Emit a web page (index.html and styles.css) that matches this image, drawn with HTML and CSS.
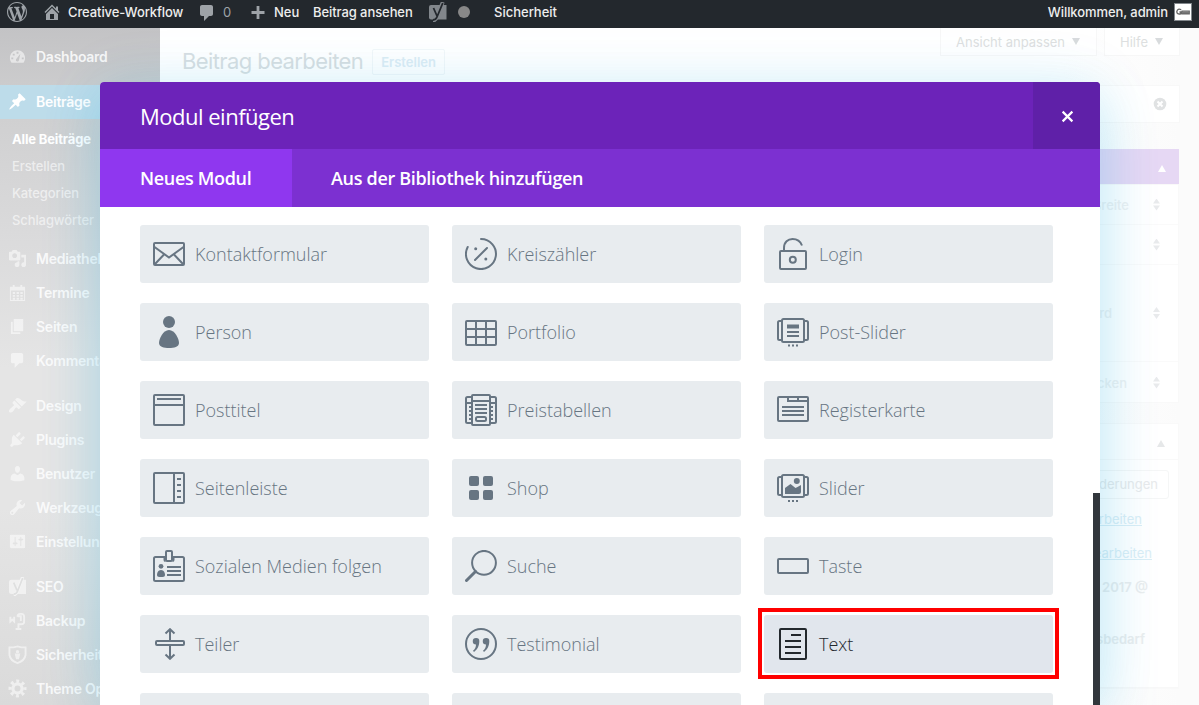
FILE: index.html
```html
<!DOCTYPE html>
<html lang="de">
<head>
<meta charset="utf-8">
<title>Beitrag bearbeiten</title>
<link rel="stylesheet" href="styles.css">
</head>
<body>
<header class="adminbar">
  <svg class="ab-icon ab-logo" viewBox="0 0 20 20"><path d="M20 10c0-5.51-4.49-10-10-10C4.48 0 0 4.49 0 10c0 5.52 4.48 10 10 10 5.51 0 10-4.48 10-10zM7.78 15.37L4.37 6.22c.55-.02 1.17-.08 1.17-.08.5-.06.44-1.13-.06-1.11 0 0-1.45.11-2.37.11-.18 0-.37 0-.58-.01C4.12 2.69 6.87 1.11 10 1.11c2.33 0 4.45.87 6.05 2.34-.68-.11-1.65.39-1.65 1.58 0 .74.45 1.36.9 2.1.35.61.55 1.36.55 2.46 0 1.49-1.4 5-1.4 5l-3.03-8.37c.54-.02.82-.17.82-.17.5-.05.44-1.25-.06-1.22 0 0-1.44.12-2.38.12-.87 0-2.33-.12-2.33-.12-.5-.03-.56 1.2-.06 1.22l.92.08 1.26 3.41zM17.41 10c.24-.64.74-1.87.43-4.25.7 1.29 1.05 2.71 1.05 4.25 0 3.29-1.73 6.24-4.4 7.78.97-2.59 1.94-5.2 2.92-7.78zM6.1 18.09C3.12 16.65 1.11 13.53 1.11 10c0-1.3.23-2.48.72-3.59C3.25 10.3 4.67 14.2 6.1 18.09zm4.03-6.63l2.58 6.98c-.86.29-1.76.45-2.71.45-.79 0-1.57-.11-2.29-.33.81-2.38 1.62-4.74 2.42-7.1z"/></svg>
  <div class="ab-item ab-site"><svg class="ab-icon" viewBox="0 0 20 20"><path d="M16 8.5l1.53 1.53-1.06 1.06L10 4.6l-6.47 6.49-1.06-1.06L10 2.5l4 4v-2h2v4zm-6-2.46l6 5.99V18H4v-5.97zM12 17v-5H8v5h4z"/></svg><span>Creative-Workflow</span></div>
  <div class="ab-item ab-comments"><svg class="ab-icon" viewBox="0 0 20 20"><path d="M5 3h9c1.100 0 2 .9 2 2v7c0 1.100-.9 2-2 2h-2l-5 5v-5H5c-1.100 0-2-.9-2-2V5c0-1.100.9-2 2-2z"/></svg><span class="ab-dim">0</span></div>
  <div class="ab-item ab-new"><svg class="ab-icon" viewBox="0 0 20 20"><path d="M8.600 4h2.800v5.100h5.100v2.800h-5.100v5.100h-2.800v-5.100h-5.100v-2.800h5.100z"/></svg><span>Neu</span></div>
  <div class="ab-item ab-view"><span>Beitrag ansehen</span></div>
  <div class="ab-item ab-seo"><svg class="ab-icon" viewBox="0 0 20 20"><path d="M3 3h15.500v14.500H3q-2 0-2-2V5q0-2 2-2z"/><path class="ab-edge" d="M14.800 0L9 15q-1.200 3.500-4 3.500"/><path class="ab-cut" d="M5.500 6l3.500 8M14.800 1L9 15q-1.200 3-4 3"/></svg><i class="ab-dot"></i></div>
  <div class="ab-item ab-security"><span>Sicherheit</span></div>
  <div class="ab-item ab-user"><span>Willkommen, admin</span><b class="avatar"><svg viewBox="0 0 18 18"><path d="M7 6.500Q3 4.500 2 8.500Q2 12 6.500 11V9H5M8 8h8v3H8z" fill="none" stroke="#666" stroke-width="1.500"/><path d="M8 9.500h8" stroke="#777" stroke-width="2"/></svg></b></div>
</header>

<div class="page">
  <nav class="sidebar">
    <a class="menu-item first"><svg viewBox="0 0 20 20"><path fill-rule="evenodd" d="M3.760 16.500h12.480c1.100-1.370 1.760-3.110 1.760-5 0-4.420-3.580-8-8-8s-8 3.580-8 8c0 1.890.66 3.630 1.760 5zM9 5h2v2H9zM5 7h2v2H5zM3.500 11h2v2h-2zM14.500 11h2v2h-2zM8.500 13l4.500-6-1.500 7a1.600 1.600 0 1 1-3-1z"/></svg>Dashboard</a>
    <a class="menu-item current"><svg viewBox="0 0 20 20"><path d="M10.440 3.020l1.820-1.820 6.360 6.350-1.830 1.820c-1.050-.68-2.480-.57-3.410.36l-.75.75c-.92.93-1.040 2.350-.35 3.410l-1.830 1.820-2.410-2.410-2.800 2.790c-.42.42-3.380 2.710-3.800 2.290s1.860-3.390 2.280-3.810l2.790-2.790L4.100 9.360l1.830-1.820c1.050.69 2.480.57 3.400-.36l.75-.75c.93-.92 1.050-2.350.36-3.410z"/></svg>Beiträge</a>
    <div class="submenu"><a class="on">Alle Beiträge</a><a>Erstellen</a><a>Kategorien</a><a>Schlagwörter</a></div>
    <a class="menu-item"><svg viewBox="0 0 20 20"><path d="M13 11V4c0-.55-.45-1-1-1h-1.670L9 1H5L3.670 3H2c-.55 0-1 .45-1 1v7c0 .55.45 1 1 1h10c.55 0 1-.45 1-1zM7 4.500c1.380 0 2.500 1.120 2.500 2.500S8.380 9.500 7 9.500 4.500 8.380 4.500 7 5.620 4.500 7 4.500zM14 6h5v10.500c0 1.380-1.120 2.500-2.500 2.500S14 17.880 14 16.500s1.120-2.500 2.500-2.500c.17 0 .34.02.5.05V9h-3V6zm-4 8.050V13h2v3.500c0 1.380-1.120 2.500-2.500 2.500S7 17.880 7 16.500 8.120 14 9.500 14c.17 0 .34.02.5.05z"/></svg>Mediathek</a>
    <a class="menu-item"><svg viewBox="0 0 20 20"><path fill-rule="evenodd" d="M2 4h3V2h2v2h6V2h2v2h3v15H2zM3 8v10h14V8z"/><path d="M5 9.500h2.500v2H5zM9 9.500h2.500v2H9zM13 9.500h2.500v2H13zM5 12.500h2.500v2H5zM9 12.500h2.500v2H9zM13 12.500h2.500v2H13zM5 15.500h2.500v2H5zM9 15.500h2.500v2H9zM13 15.500h2.500v2H13z"/></svg>Termine</a>
    <a class="menu-item"><svg viewBox="0 0 20 20"><path d="M6 15V2h10v13H6zm-1 1h8v2H3V5h2v11z"/></svg>Seiten</a>
    <a class="menu-item"><svg viewBox="0 0 20 20"><path d="M5 2h9c1.100 0 2 .9 2 2v7c0 1.100-.9 2-2 2h-2l-5 5v-5H5c-1.100 0-2-.9-2-2V4c0-1.100.9-2 2-2z"/></svg>Kommentare</a>
    <a class="menu-item group"><svg viewBox="0 0 20 20"><path d="M14.480 11.060L7.410 3.990l1.500-1.500c.5-.56 2.300-.47 3.510.32 1.210.8 1.430 1.280 2.910 2.100 1.180.64 2.450 1.260 4.450.85zm-.71.71L6.700 4.700 4.930 6.470c-.39.39-.39 1.020 0 1.410l1.060 1.060c.39.39.39 1.030 0 1.420-.6.6-1.430 1.110-2.210 1.690-.35.26-.7.53-1.010.84C1.430 14.230.4 16.080 1.400 17.070c.99 1 2.840-.03 4.180-1.360.31-.31.58-.66.85-1.020.57-.78 1.080-1.610 1.690-2.210.39-.39 1.020-.39 1.410 0l1.060 1.060c.39.39 1.020.39 1.410 0z"/></svg>Design</a>
    <a class="menu-item"><svg viewBox="0 0 20 20"><path d="M13.110 4.360L9.870 7.600 8 5.730l3.240-3.240c.35-.34 1.050-.2 1.560.32.52.51.66 1.210.31 1.550zm-8 1.770l.91-1.120 9.010 9.010-1.190.84c-.71.71-2.630 1.160-3.820 1.160H6.140L4.900 17.260c-.59.59-1.540.59-2.120 0-.59-.58-.59-1.530 0-2.120l1.240-1.240v-3.880c0-1.130.4-3.190 1.090-3.890zm7.260 3.970l3.240-3.240c.34-.35 1.040-.21 1.550.31.52.51.66 1.210.31 1.550l-3.240 3.250z"/></svg>Plugins</a>
    <a class="menu-item"><svg viewBox="0 0 20 20"><path d="M10 9.250c-2.270 0-2.730-3.440-2.730-3.440C7 4.020 7.820 2 9.970 2c2.160 0 2.980 2.020 2.710 3.810 0 0-.41 3.440-2.680 3.440zm0 2.570L12.720 10c2.390 0 4.520 2.330 4.520 4.530v2.490s-3.650 1.130-7.240 1.130c-3.650 0-7.240-1.130-7.240-1.130v-2.490c0-2.250 1.940-4.480 4.470-4.480z"/></svg>Benutzer</a>
    <a class="menu-item"><svg viewBox="0 0 20 20"><path d="M16.680 9.770c-1.340 1.340-3.300 1.670-4.950.99l-5.410 6.520c-.99.99-2.590.99-3.580 0s-.99-2.590 0-3.570l6.520-5.420c-.68-1.650-.35-3.610.99-4.950 1.280-1.280 3.120-1.620 4.720-1.060l-2.890 2.890 2.820 2.820 2.860-2.870c.53 1.580.18 3.390-1.080 4.650zM3.810 16.210c.4.39 1.040.39 1.430 0 .4-.4.4-1.040 0-1.430-.39-.4-1.030-.4-1.430 0-.39.39-.39 1.030 0 1.430z"/></svg>Werkzeuge</a>
    <a class="menu-item"><svg viewBox="0 0 20 20"><path d="M18 16V4c0-.55-.45-1-1-1H3c-.55 0-1 .45-1 1v12c0 .55.45 1 1 1h14c.55 0 1-.45 1-1zM8 11h1c.55 0 1 .45 1 1s-.45 1-1 1H8v1.500c0 .28-.22.5-.5.5s-.5-.22-.5-.5V13H6c-.55 0-1-.45-1-1s.45-1 1-1h1V5.500c0-.28.22-.5.5-.5s.5.22.5.5V11zm5-2h-1c-.55 0-1-.45-1-1s.45-1 1-1h1V5.500c0-.28.22-.5.5-.5s.5.22.5.5V7h1c.55 0 1 .45 1 1s-.45 1-1 1h-1v5.500c0 .28-.22.5-.5.5s-.5-.22-.5-.5V9z"/></svg>Einstellungen</a>
    <a class="menu-item group"><svg viewBox="0 0 20 20"><path d="M3.500 3H19v15H3.500q-2.500 0-2.500-2.500v-10Q1 3 3.500 3z"/><path fill="none" stroke="#fff" stroke-width="3.600" d="M15.500 0L10 15q-1.200 3.500-4 3.500"/><path fill="none" stroke="#dedfdf" stroke-width="1.800" d="M6 6l3.500 8M15.500 1L10 15q-1.200 3-4 3"/></svg>SEO</a>
    <a class="menu-item"><svg viewBox="0 0 20 20"><path fill="none" stroke="currentColor" stroke-width="2" d="M2.500 6v5l2-2 2 2V6M10 6q0-3 3-3h1q3 0 3 3v5q0 3-3 3h-3M10 5.500h3.500v5M11 13v6M8 19h6"/></svg>Backup</a>
    <a class="menu-item"><svg viewBox="0 0 20 20"><path fill="none" stroke="currentColor" stroke-width="2" d="M1.500 2.500H6l4-1 4 1h4.500v8q-1 6-8.500 8.500-7.500-2.500-8.500-8.500z"/><circle cx="10" cy="7" r="1.800"/><path d="M7 9h6l-1.500 6h-3z"/></svg>Sicherheit</a>
    <a class="menu-item"><svg viewBox="0 0 20 20"><circle cx="10" cy="10" r="4.800" fill="none" stroke="currentColor" stroke-width="3.400"/><circle cx="10" cy="10" r="7.800" fill="none" stroke="currentColor" stroke-width="3.400" stroke-dasharray="3.100 3.026" stroke-dashoffset="1.550"/></svg>Theme Optionen</a>
  </nav>

  <main class="content">
    <div class="topline">
      <h1>Beitrag bearbeiten</h1><span class="add-new">Erstellen</span>
      <div class="screen-tabs"><span class="tab-view">Ansicht anpassen <i class="down"></i></span><span class="tab-help">Hilfe <i class="down"></i></span></div>
    </div>
    <div class="notice"><svg viewBox="0 0 14 14"><circle cx="7" cy="7" r="6.300" fill="#e0e2e3"/><path d="M4.500 4.500l5 5m0-5l-5 5" stroke="#fff" stroke-width="2"/></svg></div>
    <aside class="metaboxes">
      <div class="box-head divi"><i class="up"></i></div>
      <div class="box settings">
        <div class="row r1"><span>Breite</span><i class="sorter"></i></div>
        <div class="row r2"><i class="sorter"></i></div>
        <div class="row r3"><span>Standard</span><i class="sorter"></i></div>
        <div class="row r4"><span>Verstecken</span><i class="sorter"></i></div>
      </div>
      <div class="box publish">
        <div class="box-head"><i class="up"></i></div>
        <div class="preview"><span>Änderungen</span></div>
        <p class="link l1"><u>Bearbeiten</u></p>
        <p class="link l2"><u>Bearbeiten</u></p>
        <p class="meta m1">2017 @</p>
        <p class="meta m2">Lesbarkeit: Verbesserungsbedarf</p>
      </div>
    </aside>
  </main>
</div>

<section class="modal">
  <div class="modal-head"><h2>Modul einfügen</h2><button class="close"><svg viewBox="0 0 12 12"><path d="M1.500 1.500l9 9m0-9l-9 9"/></svg></button></div>
  <div class="modal-tabs"><a class="active">Neues Modul</a><a>Aus der Bibliothek hinzufügen</a></div>
  <div class="modal-body">
    <div class="module"><svg viewBox="0 0 32 32"><rect x="1" y="5" width="30" height="22" rx="1"/><path d="M1.500 9L16 19.500 30.500 9M2 26L11 16.500M30 26L21 16.500"/></svg><span>Kontaktformular</span></div>
    <div class="module"><svg viewBox="0 0 32 32"><path stroke-linecap="round" d="M16 1A15 15 0 1 1 2.700 9M10 22L22 10"/><circle class="f" cx="10.700" cy="10.800" r="1.500"/><circle class="f" cx="20.800" cy="21" r="1.500"/></svg><span>Kreiszähler</span></div>
    <div class="module"><svg viewBox="0 0 32 32"><rect x="3" y="13" width="26" height="18" rx="1"/><circle cx="15.800" cy="21.800" r="3"/><path d="M7 13V10C7 4 11 1 15.500 1C20 1 23.500 3.500 25 7.500"/></svg><span>Login</span></div>

    <div class="module"><svg viewBox="0 0 32 32"><circle class="f" cx="16" cy="6" r="6"/><path class="f" d="M16 14C22 14 26 23 26 27C26 31 21 32 16 32S6 31 6 27C6 23 10 14 16 14z"/></svg><span>Person</span></div>
    <div class="module"><svg viewBox="0 0 32 32"><rect x="1" y="5" width="30" height="24" rx="1"/><path d="M1 13h30M1 21h30M11 5v24M21 5v24"/></svg><span>Portfolio</span></div>
    <div class="module"><svg viewBox="0 0 32 32"><rect x="5" y="3" width="22" height="23" rx="1.500"/><path d="M5 5H2.500Q1 5 1 6.500v16Q1 24 2.500 24H5M27 5h2.500Q31 5 31 6.500v16q0 1.500-1.500 1.500H27M10 16h12M10 20h12"/><path class="f" d="M10 8.500h12v4H10zM11 28.500h2v2h-2zM15 28.500h2v2h-2zM19 28.500h2v2h-2z"/></svg><span>Post-Slider</span></div>

    <div class="module"><svg viewBox="0 0 32 32"><rect x="1" y="1" width="30" height="30" rx="1"/><path d="M1 11h30M4 5h24"/></svg><span>Posttitel</span></div>
    <div class="module"><svg viewBox="0 0 32 32"><rect x="7" y="1" width="18" height="30" rx="1"/><path d="M7 3H2.500Q1 3 1 4.500v23Q1 29 2.500 29H7M25 3h4.500Q31 3 31 4.500v23q0 1.500-1.500 1.500H25M7 7h18M1 9h6M25 9h6M10 11h12M10 15h12M10 19h12M4 13h3M4 17h3M4 21h3M4 25h3M25 13h3M25 17h3M25 21h3M25 25h3"/><rect x="11" y="23" width="10" height="4" rx="1.500"/></svg><span>Preistabellen</span></div>
    <div class="module"><svg viewBox="0 0 32 32"><rect x="1" y="3" width="30" height="24" rx="1"/><path d="M11 3v4h20M21 3v4M5 13h22M5 17h22M5 21h22"/></svg><span>Registerkarte</span></div>

    <div class="module"><svg viewBox="0 0 32 32"><rect x="1" y="1" width="30" height="30" rx="1"/><path d="M21 1v30M24 7h4M24 13h4M24 19h4M24 25h4"/></svg><span>Seitenleiste</span></div>
    <div class="module"><svg viewBox="0 0 32 32"><g class="f"><rect x="4" y="4" width="10" height="10" rx="2"/><rect x="18" y="4" width="10" height="10" rx="2"/><rect x="4" y="18" width="10" height="10" rx="2"/><rect x="18" y="18" width="10" height="10" rx="2"/></g></svg><span>Shop</span></div>
    <div class="module"><svg viewBox="0 0 32 32"><rect x="5" y="3" width="22" height="22" rx="1.500"/><path d="M5 5H2.500Q1 5 1 6.500v15Q1 23 2.500 23H5M27 5h2.500Q31 5 31 6.500v15q0 1.500-1.500 1.500H27"/><circle class="f" cx="19.800" cy="9" r="3"/><path class="f" d="M8 22v-6l5.500-4 5 4 2-1 3.500-2v7q0 2-2 2zM11 28h2v2h-2zM15 28h2v2h-2zM19 28h2v2h-2z"/></svg><span>Slider</span></div>

    <div class="module"><svg viewBox="0 0 32 32"><path d="M12 7H2.500Q1 7 1 8.500v21Q1 31 2.500 31h27q1.500 0 1.500-1.500v-21Q31 7 29.500 7H20M14 17h14M14 21h14M14 25h14"/><rect x="13" y="1" width="6" height="10" rx="1"/><path d="M11.500 7v3q0 1 1 1M20.500 7v3q0 1-1 1"/><circle class="f" cx="8" cy="16.300" r="2.400"/><path class="f" d="M8 20c3 0 4 3 4 5 0 2-2 2-4 2s-4 0-4-2c0-2 1-5 4-5z"/></svg><span>Sozialen Medien folgen</span></div>
    <div class="module"><svg viewBox="0 0 32 32"><circle cx="19" cy="12.800" r="11.900"/><path d="M10.500 21.500L1.500 30.500" stroke-width="3" stroke-linecap="round"/></svg><span>Suche</span></div>
    <div class="module"><svg viewBox="0 0 32 32"><rect x="1" y="9" width="30" height="14" rx="1"/></svg><span>Taste</span></div>

    <div class="module"><svg viewBox="0 0 32 32"><rect x="3" y="13" width="28" height="4" rx="1"/><path d="M17 1v12M17 17v14M12.500 5.500L17 1.200l4.500 4.300M12.500 26.500l4.500 4.300 4.500-4.300"/></svg><span>Teiler</span></div>
    <div class="module"><svg viewBox="0 0 32 32"><circle cx="16" cy="16" r="15"/><path class="f" d="M11 10a3.200 3.200 0 0 1 3.300 3.300c0 5-2.300 8.500-5.300 10.700l-1-1.200c2-1.800 3-3.800 3-6.300A3.200 3.200 0 0 1 11 10zM21 10a3.200 3.200 0 0 1 3.300 3.300c0 5-2.300 8.500-5.300 10.700l-1-1.200c2-1.800 3-3.800 3-6.300A3.200 3.200 0 0 1 21 10z"/></svg><span>Testimonial</span></div>
    <div class="module hover"><svg viewBox="0 0 32 32"><rect x="3" y="1" width="26" height="30" rx="1"/><path d="M14 7h10M8 13h16M8 19h16M8 25h16"/></svg><span>Text</span></div>

    <div class="module"></div><div class="module"></div><div class="module"></div>
  </div>
  <div class="highlight"></div>
  <div class="scrollbar"></div>
</section>
</body>
</html>
```
FILE: styles.css
```css
* { box-sizing: border-box; }
body { margin: 0; width: 1199px; height: 705px; overflow: hidden; position: relative; font-family: Inter, "Liberation Sans", sans-serif; font-size: 13px; background: #fbfbfb; }
h1, h2, p { margin: 0; font-weight: 400; }
svg { display: block; flex: none; }
.adminbar { position: relative; z-index: 3; display: flex; align-items: flex-start; height: 28px; padding: 0 7px; background: #23282d; color: #eee; font-weight: 500; line-height: 25px; white-space: nowrap; }
.ab-icon { width: 20px; height: 20px; fill: #9ea3a8; margin-top: 2px; }
.ab-logo { margin-right: 15px; }
.ab-item { display: flex; }
.ab-site { width: 156px; gap: 6px; letter-spacing: -.1px; }
.ab-comments { width: 50px; gap: 6px; }
.ab-comments .ab-icon { margin-left: -1px; }
.ab-dim { color: #9ea3a8; font-weight: 400; }
.ab-new { width: 65px; gap: 6px; }
.ab-view { width: 115px; letter-spacing: -.08px; }
.ab-seo { width: 66px; gap: 10px; }
.ab-seo .ab-icon { fill: #82878c; }
.ab-cut { fill: none; stroke: #23282d; stroke-width: 1.8; }
.ab-edge { fill: none; stroke: #82878c; stroke-width: 3.8; }
.ab-dot { width: 12px; height: 12px; margin-top: 6px; border-radius: 50%; background: #888; }
.ab-user { margin-left: auto; gap: 6px; letter-spacing: -.08px; }
.avatar { width: 18px; height: 18px; margin-top: 3px; border: 1px solid #82878c; background: #fff; }
.avatar svg { width: 16px; height: 16px; }

.page { display: flex; height: 677px; overflow: hidden; }
.sidebar { width: 160px; flex: none; padding-top: 12px; background: linear-gradient(180deg, #c3c3c5 0, #cfcfd0 80px, #dbdbdc 215px, #e5e5e5 340px, #e5e5e5 480px, #dadada 677px); }
.menu-item { display: flex; align-items: center; gap: 9px; height: 34px; padding: 0 0 2px 8px; color: rgba(255,255,255,.85); font-size: 14px; font-weight: 600; letter-spacing: -.25px; white-space: nowrap; }
.menu-item svg { width: 19px; height: 19px; fill: currentColor; opacity: .65; }
.menu-item.current { margin-top: 11px; background: #bddcea; color: #fff; }
.menu-item.current svg { opacity: 1; }
.menu-item.group { margin-top: 11px; }
.submenu { padding: 7px 12px 8px; height: 123px; color: rgba(255,255,255,.6); }
.submenu a { display: block; line-height: 27px; font-weight: 500; letter-spacing: -.1px; }
.submenu .on { color: #fff; font-weight: 700; letter-spacing: -.15px; }

.content { flex: 1; background: linear-gradient(90deg, #fff 0, #fff 900px, #fbfbfb 1020px); }
.topline { display: flex; height: 57px; padding: 0 19px 0 22px; color: #d9dfe2; }
.topline h1 { font-size: 22px; line-height: 67px; letter-spacing: -.6px; }
.add-new { height: 26px; margin: 21px 0 0 9px; padding: 0 8px; border: 1px solid #f3f7f9; border-radius: 2px; color: #deedf5; font-weight: 600; line-height: 25px; }
.screen-tabs { display: flex; gap: 7px; margin-left: auto; height: 28px; line-height: 28px; color: #dddfe0; }
.screen-tabs span { display: flex; align-items: center; gap: 7px; border: 1px solid #f7f7f7; border-top: 0; background: #fff; }
.tab-view { width: 157px; padding-left: 15px; }
.tab-help { width: 76px; padding-left: 15px; }
.down { border: 4.500px solid transparent; border-top: 7px solid #d8dbdd; border-bottom: 0; }
.up { border: 4.500px solid transparent; border-bottom: 7px solid #e6e8e9; border-top: 0; }
.notice { display: flex; justify-content: flex-end; align-items: center; width: 998px; height: 38px; margin-left: 22px; padding-right: 12px; border: 1px solid #f8f8f8; background: #fff; }
.notice svg { width: 14px; height: 14px; }
.metaboxes { width: 320px; margin: 26px 0 0 699px; color: #eff1f2; font-weight: 500; text-align: right; }
.box { border: 1px solid #f9f9f9; background: #fff; }
.box-head { display: flex; justify-content: flex-end; align-items: center; height: 36px; padding: 4px 13px 0 0; border-bottom: 1px solid #f9f9f9; }
.box-head.divi { height: 35px; padding: 3px 13px 0 0; border: 0; background: #e6d8f4; }
.divi .up { border-bottom-color: #fff; }
.settings { height: 219px; }
.row { display: flex; justify-content: flex-end; align-items: center; padding-right: 18px; gap: 24px; border-bottom: 1px solid #fafafa; }
.r1, .r2 { height: 40px; }
.r3 { height: 97px; }
.r4 { height: 41px; }
.r3 { gap: 41px; }
.row.r4 { gap: 26px; border: 0; }
.sorter { width: 7px; height: 12px; background: #e9ebec; clip-path: polygon(50% 0, 100% 42%, 0 42%, 0 58%, 100% 58%, 50% 100%, 0 58%, 0 42%); }
.publish { height: 266px; margin-top: 20px; }
.preview { display: flex; justify-content: flex-end; padding: 10px 9px 0 0; }
.preview span { height: 29px; padding: 0 10px; border: 1px solid #f5f6f6; border-radius: 3px; line-height: 27px; font-weight: 400; color: #e8eaeb; }
.link { height: 34px; line-height: 20px; font-weight: 400; color: #dbeef6; }
.l1 { padding: 10px 36px 0 0; }
.l2 { padding: 10px 26px 0 0; }
.meta { height: 34px; line-height: 20px; font-weight: 600; color: #ebedee; }
.m1 { padding: 10px 30px 0 0; height: 52px; }
.m2 { padding: 10px 33px 0 0; height: 69px; border-bottom: 1px solid #f8f8f8; }

.modal { position: absolute; left: 100px; top: 82px; width: 1000px; height: 623px; border-radius: 4px 4px 0 0; background: #fff; box-shadow: 0 20px 60px rgba(0,166,222,.2), 0 0 60px rgba(0,166,222,.1); font-family: "Open Sans", sans-serif; }
.modal-head { display: flex; justify-content: space-between; height: 67px; padding-left: 40px; border-radius: 4px 4px 0 0; background: #6c23b9; color: #fff; overflow: hidden; }
.modal-head h2 { font-size: 22px; line-height: 69px; letter-spacing: -.5px; }
.close { display: flex; align-items: center; justify-content: center; width: 67px; padding: 2px 0 0 1px; border: 0; background: #5f20a8; }
.close svg { width: 13px; height: 13px; fill: none; stroke: #fff; stroke-width: 2; }
.modal-tabs { display: flex; height: 58px; background: #7c30d1; color: #fff; font-size: 18px; font-weight: 600; line-height: 58px; letter-spacing: -.32px; }
.modal-tabs a { padding: 0 39px 0 40px; white-space: nowrap; }
.modal-tabs .active { width: 192px; margin-right: -1px; background: #8f37ef; }
.modal-body { display: grid; grid-template-columns: repeat(3, 289px); grid-auto-rows: 58px; gap: 20px 23px; padding: 18px 0 0 40px; height: 498px; overflow: hidden; }
.module { display: flex; align-items: center; gap: 10px; padding-left: 13px; border-radius: 3px; background: #e8ecef; color: #677582; font-size: 18px; font-weight: 300; white-space: nowrap; }
.module svg { width: 32px; height: 32px; fill: none; stroke: currentColor; stroke-width: 2; }
.module .f { fill: currentColor; stroke: none; }
.module.hover { background: #e1e6ed; color: #23282d; }
.highlight { position: absolute; left: 658px; top: 526px; width: 301px; height: 71px; border: 4px solid #f00; }
.scrollbar { position: absolute; right: 0; top: 411px; width: 7px; height: 212px; background: #32373c; }
```
